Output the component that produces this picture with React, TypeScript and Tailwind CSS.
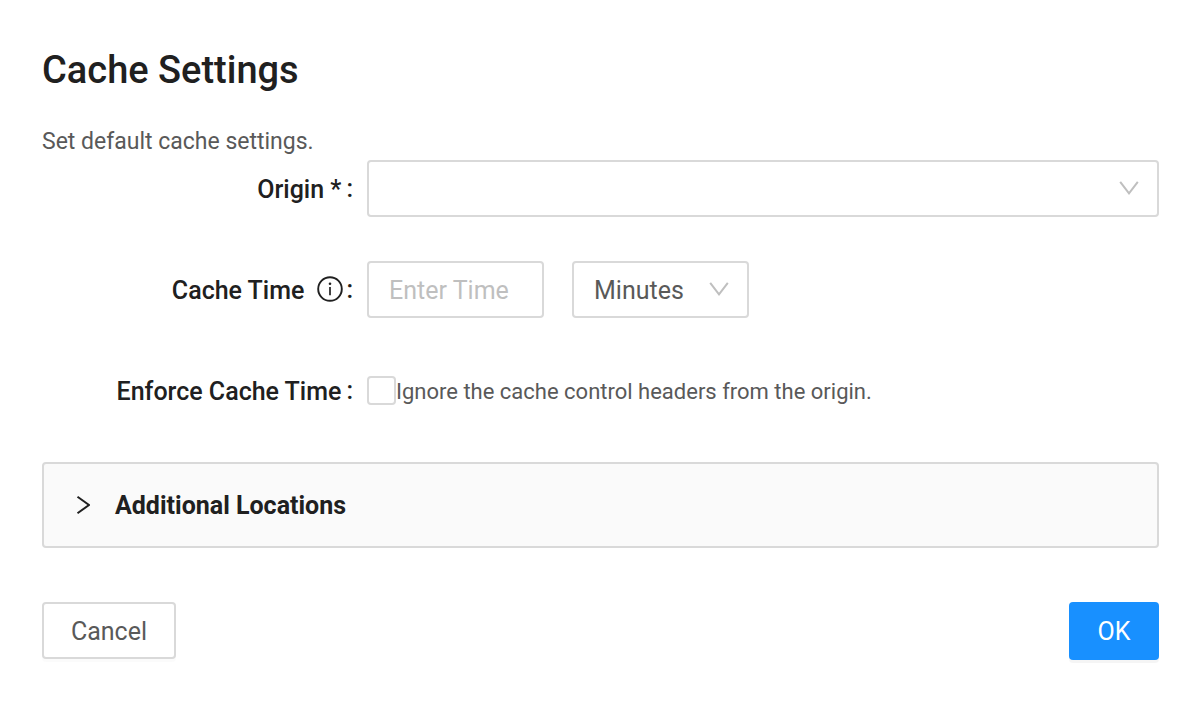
import { useState } from "react";

const label = "flex h-[57px] w-[311px] shrink-0 items-center justify-end pt-[2px] text-[25px] font-medium text-[#202020]";
const box = "h-[57px] rounded-[4px] border-2 border-[#d9d9d9] bg-white text-[25px] text-[#595959]";

function Chevron() {
  return (
    <svg viewBox="0 0 20 14" className="pointer-events-none absolute top-[21px] right-5 h-[14px] w-5 text-[#bfbfbf]" fill="none" stroke="currentColor" strokeWidth="2" aria-hidden="true">
      <path d="M1.2 0.8 L10 12.3 L18.8 0.8" />
    </svg>
  );
}

function InfoIcon() {
  return (
    <svg viewBox="0 0 26 26" className="mb-[3px] ml-[13px] h-[26px] w-[26px]" fill="none" stroke="currentColor" strokeWidth="1.9" aria-hidden="true">
      <circle cx="13" cy="13" r="11.8" />
      <path d="M13 11V19.3" strokeWidth="1.7" />
      <circle cx="13" cy="7.8" r="1.3" fill="currentColor" stroke="none" />
    </svg>
  );
}

export default function App() {
  const [open, setOpen] = useState(false);
  return (
    <main className="bg-white pt-[45px] pr-[41px] pb-10 pl-[42px] font-[Roboto,sans-serif]">
      <h1 className="text-[38px] leading-[50px] font-medium text-[#202020]">Cache Settings</h1>
      <p className="mt-[30px] mb-[2px] text-[23px] leading-[33px] text-[#595959]">Set default cache settings.</p>
      <form onSubmit={(e) => e.preventDefault()}>
        <div className="flex gap-[14px]">
          <label htmlFor="origin" className={label}>Origin *<span className="mb-[2px] ml-[5px]">:</span></label>
          <div className="relative flex-1">
            <select id="origin" className={`${box} w-full appearance-none px-5`}>
              <option value=""></option>
            </select>
            <Chevron />
          </div>
        </div>
        <div className="mt-11 flex gap-[14px]">
          <label htmlFor="time" className={label}>Cache Time<InfoIcon /><span className="mb-[2px] ml-[3px]">:</span></label>
          <div className="flex gap-7">
            <input id="time" placeholder="Enter Time" className={`${box} w-[177px] px-5 pt-[2px] placeholder:text-[#bfbfbf]`} />
            <div className="relative">
              <select aria-label="Time unit" className={`${box} w-[177px] appearance-none px-5 pt-[2px]`}>
                <option>Minutes</option>
              </select>
              <Chevron />
            </div>
          </div>
        </div>
        <div className="mt-11 flex items-center gap-[14px]">
          <label htmlFor="enforce" className={label}>Enforce Cache Time<span className="mb-[2px] ml-[5px]">:</span></label>
          <div className="flex items-center">
            <input id="enforce" type="checkbox" className="h-[29px] w-[29px] appearance-none rounded-[4px] border-2 border-[#d9d9d9] bg-white checked:bg-[#1890ff]" />
            <label htmlFor="enforce" className="pt-[2px] text-[22px] text-[#595959]">Ignore the cache control headers from the origin.</label>
          </div>
        </div>
        <button type="button" aria-expanded={open} onClick={() => setOpen(!open)} className="mt-[43px] flex h-[86px] w-full items-center rounded-[4px] border-2 border-[#d9d9d9] bg-[#fafafa] pl-8 text-[25px] font-bold text-[#202020]">
          <svg viewBox="0 0 14 20" className="mr-[25px] h-5 w-[14px]" fill="none" stroke="currentColor" strokeWidth="2" aria-hidden="true">
            <path d="M1.5 1.8 L13 10 L1.5 18.2" />
          </svg>
          <span className="pt-[2px]">Additional Locations</span>
        </button>
        <div className="mt-[54px] flex justify-between">
          <button type="button" className={`${box} w-[134px] pt-[2px] shadow-[0_3px_0_rgba(0,0,0,0.015)]`}>Cancel</button>
          <button type="submit" className="h-[58px] w-[90px] rounded-[4px] bg-[#1890ff] pt-[2px] text-[25px] text-white shadow-[0_3px_0_rgba(0,0,0,0.04)]">OK</button>
        </div>
      </form>
    </main>
  );
}
